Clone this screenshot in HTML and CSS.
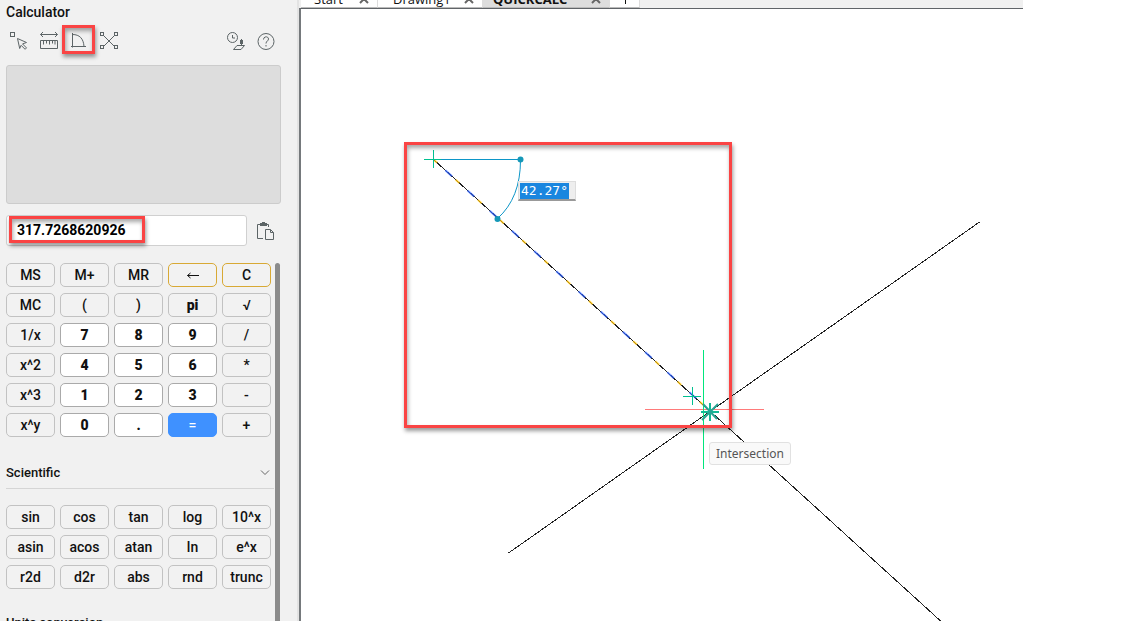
FILE: index.html
```html
<!DOCTYPE html>
<html lang="en">
<head>
<meta charset="utf-8">
<title>Calculator</title>
<link rel="stylesheet" href="styles.css">
</head>
<body>
<div class="app">
  <aside class="panel">
    <h1 class="title">Calculator</h1>
    <div class="toolbar">
      <button class="tool" aria-label="Get coordinates"><svg width="20" height="20" viewBox="0 0 20 20"><rect x="1.500" y="1.500" width="4" height="4"/><path d="M8.500 7.500l9 4-4 1.400 4 4-1.400 1.400-4-4-1.400 3.200z"/></svg></button>
      <button class="tool" aria-label="Distance"><svg width="20" height="20" viewBox="0 0 20 20"><path d="M1.500 3.500h17M4 1L1.500 3.500 4 6M16 1l2.500 2.500L16 6M1.500 9.500h17v8h-17zM4.500 9.500v4M7.500 9.500v3M10.500 9.500v4M13.500 9.500v3M16 9.500v4"/></svg></button>
      <button class="tool" aria-label="Angle"><svg width="20" height="20" viewBox="0 0 20 20"><path d="M3.500 2v14.500M2 15.500h15M3.500 3.500c7 0 11 4 11.500 12"/></svg></button>
      <button class="tool" aria-label="Intersection of lines"><svg width="20" height="20" viewBox="0 0 20 20"><path d="M4.500 4.500l11 11M15.500 4.500l-11 11"/><g class="node"><rect x="1.500" y="1.500" width="3" height="3"/><rect x="15.500" y="1.500" width="3" height="3"/><rect x="1.500" y="14.500" width="3" height="3"/><rect x="15.500" y="14.500" width="3" height="3"/></g></svg></button>
      <span class="spacer"></span>
      <button class="tool" aria-label="Clear history"><svg width="20" height="20" viewBox="0 0 20 20"><circle cx="6.500" cy="6.500" r="5"/><path d="M6.500 4v3H9M11 14.500h7.500l-3.500 4H7.500zM15.500 8v6"/><path class="thick" d="M15.500 9v4"/></svg></button>
      <button class="tool" aria-label="Help"><svg width="20" height="20" viewBox="0 0 20 20"><circle cx="10" cy="10.500" r="8"/><path d="M7.500 8.500c0-3.500 5-3.500 5-.5 0 2-2.500 2-2.500 4.500M10 14v1.500"/></svg></button>
    </div>
    <div class="history"></div>
    <div class="entry">
      <input class="result" type="text" aria-label="Result" value="317.7268620926">
      <button class="tool" aria-label="Paste value"><svg width="20" height="20" viewBox="0 0 20 20"><path d="M8 17.500H2.500v-14h3M11 3.500h2.500V6M10.500 8.500h5l3 3v7h-8zM15.500 8.500v3h3"/><path class="solid" d="M5 2h2V1h3v1h2v3H5z"/></svg></button>
    </div>
    <div class="scroll">
      <div class="keys">
        <button>MS</button><button>M+</button><button>MR</button><button class="edit" aria-label="Backspace"><svg width="14" height="8" viewBox="0 0 14 8"><path d="M1.500 4.500H13M4.500 2l-3 2.500 3 2.500"/></svg></button><button class="edit">C</button>
        <button>MC</button><button>(</button><button>)</button><button class="bold">pi</button><button>√</button>
        <button>1/x</button><button class="digit">7</button><button class="digit">8</button><button class="digit">9</button><button>/</button>
        <button>x^2</button><button class="digit">4</button><button class="digit">5</button><button class="digit">6</button><button>*</button>
        <button>x^3</button><button class="digit">1</button><button class="digit">2</button><button class="digit">3</button><button>-</button>
        <button>x^y</button><button class="digit">0</button><button class="digit">.</button><button class="equals">=</button><button>+</button>
      </div>
      <h2 class="section">Scientific <svg width="10" height="6" viewBox="0 0 10 6"><path d="M1 .5L5 4.500 9 .5"/></svg></h2>
      <div class="keys">
        <button>sin</button><button>cos</button><button>tan</button><button>log</button><button>10^x</button>
        <button>asin</button><button>acos</button><button>atan</button><button>ln</button><button>e^x</button>
        <button>r2d</button><button>d2r</button><button>abs</button><button>rnd</button><button>trunc</button>
      </div>
      <h2 class="section units">Units conversion</h2>
    </div>
    <div class="mark mark-tool"></div>
    <div class="mark mark-result"></div>
  </aside>
  <main class="workspace">
    <nav class="tabs">
      <button class="tab tab-start">Start <svg width="10" height="10" viewBox="0 0 10 10"><path d="M1 1l8 8M9 1L1 9"/></svg></button>
      <button class="tab tab-drawing">Drawing1 <svg width="10" height="10" viewBox="0 0 10 10"><path d="M1 1l8 8M9 1L1 9"/></svg></button>
      <button class="tab tab-current">QUICKCALC <svg width="10" height="10" viewBox="0 0 10 10"><path d="M1 1l8 8M9 1L1 9"/></svg></button>
      <button class="tab tab-new" aria-label="New tab"><svg width="10" height="10" viewBox="0 0 10 10"><path d="M5.500 0v10M0 4.500h10"/></svg></button>
    </nav>
    <div class="canvas">
      <svg class="drawing" width="100%" height="100%">
        <g transform="translate(-301 -9)">
          <path class="line" d="M979.500 222L508.500 553M433.500 159.500L945 625"/>
          <path class="trace-gold" d="M433.500 159.500L710 411"/>
          <path class="trace-blue" d="M433.500 159.500L710 411"/>
          <path class="arc" d="M440 159.500h80.500M520.500 160q0 38-23 58.500"/>
          <path class="cross" d="M424 159.500h17M433.500 150v18M683 396.500h18M692.500 387v18"/>
          <path class="axis-x" d="M645 409.500h119"/>
          <path class="axis-y" d="M703.500 350v119"/>
          <path class="snap" d="M701 412h18M710 403v18"/>
          <path class="snap-x" d="M702 420l16-16M703 404l14 15"/>
          <circle class="grip" cx="520.500" cy="159.500" r="3"/>
          <circle class="grip" cx="497.500" cy="219" r="3"/>
        </g>
      </svg>
      <input class="angle" type="text" aria-label="Angle" value="42.27°">
      <div class="tooltip">Intersection</div>
      <div class="mark mark-lines"></div>
    </div>
  </main>
</div>
</body>
</html>
```
FILE: styles.css
```css
* { box-sizing: border-box; }
body { margin: 0; background: #fff; font-family: Roboto, sans-serif; font-size: 14px; color: #111; overflow: hidden; }
button, input { font: inherit; color: inherit; margin: 0; }
svg { display: block; fill: none; stroke: #5c6466; }
.app { display: flex; height: calc(100vh - 8px); margin-right: 122px; overflow: hidden; }

.panel { position: relative; flex: 0 0 299px; display: flex; flex-direction: column; padding: 4px 0 0 6px; background: #f1f1f1; border-right: 2px solid #e3e3e3; }
.title { margin: 0; font-size: 14px; line-height: 16px; font-weight: 500; }
.toolbar { display: flex; gap: 10px; margin: 11px 21px 0 3px; }
.tool { width: 20px; height: 20px; padding: 0; border: 0; background: none; }
.spacer { flex: 1; }
.node { fill: #f1f1f1; }
.thick { stroke-width: 3; }
.solid { fill: #5c6466; stroke: none; }
.history { flex: 0 0 139px; margin: 14px 16px 0 0; background: #ddd; border: 1px solid #ccc; border-radius: 3px; }
.entry { display: flex; align-items: center; gap: 8px; margin: 11px 22px 0 0; }
.result { flex: 1; min-width: 0; height: 31px; padding: 0 10px 2px; background: #fff; border: 1px solid #d0d0d0; border-radius: 3px; font-weight: 700; color: #000; }

.scroll { position: relative; flex: 1; min-height: 0; margin-top: 17px; overflow: hidden; }
.scroll::after { content: ""; position: absolute; left: 269px; top: 0; bottom: 0; width: 5px; background: #8b8b8b; border-radius: 3px 3px 0 0; }
.keys { display: grid; grid-template-columns: repeat(5, 1fr); gap: 6px 5px; width: 265px; }
.keys button { display: flex; align-items: center; justify-content: center; height: 24px; padding: 0 0 1px; background: #f2f2f2; border: 1px solid #c2c2c2; border-radius: 5px; font-weight: 500; }
.keys .edit { border-color: #d8a935; }
.keys .edit svg { stroke: #111; }
.keys .bold { font-weight: 900; }
.keys .digit { background: #fff; border-color: #aaa; font-weight: 900; }
.keys .equals { background: #3f91ff; border-color: #3f91ff; color: #fff; }
.section { display: flex; justify-content: space-between; align-items: center; width: 268px; height: 31px; margin: 21px 0 16px; padding: 0 4px 1px 0; border-bottom: 1px solid #d5d5d5; font-size: 13px; font-weight: 500; }
.section svg { stroke: #666; }
.units { margin-top: 19px; }

.workspace { flex: 1; min-width: 0; display: flex; flex-direction: column; background: #f0f0f0; }
.tabs { display: flex; flex: 0 0 8px; align-items: flex-end; overflow: hidden; padding-left: 2px; }
.tab { display: flex; align-items: center; justify-content: space-between; height: 18px; padding: 0 8px 0 13px; border: 0; border-right: 1px solid #ddd; border-bottom: 1px solid #bbb; background: #fff; font-family: "Open Sans", sans-serif; font-size: 13px; line-height: 16px; }
.tab svg { stroke: #666; stroke-width: 2; }
.tab-start { width: 77px; }
.tab-drawing { width: 105px; padding-left: 15px; }
.tab-current { width: 127px; padding-left: 10px; background: #ddd; font-weight: 700; }
.tab-new { width: 30px; justify-content: center; padding: 0; }
.tab-new svg { stroke: #111; stroke-width: 1; }
.canvas { position: relative; flex: 1; min-height: 0; overflow: hidden; background: #fff; border-top: 1px solid #606468; border-left: 2px solid #75797c; }

.line { stroke: #222; shape-rendering: crispEdges; }
.trace-gold { stroke: #ffc000; stroke-width: 2; stroke-dasharray: 5 25; stroke-opacity: .7; }
.trace-blue { stroke: #2f62ff; stroke-width: 2; stroke-dasharray: 9 21; stroke-dashoffset: 14; stroke-opacity: .7; }
.arc { stroke: #0d96c8; }
.cross { stroke: #00c090; }
.axis-x { stroke: #ff7a7a; }
.axis-y { stroke: #00e67c; }
.snap { stroke: #12b995; stroke-width: 2; }
.snap-x { stroke: #28a493; stroke-width: 2; }
.grip { fill: #1598b8; stroke: none; }
.angle { position: absolute; left: 217px; top: 172px; width: 58px; height: 20px; padding: 0; border: 1px solid #ddd; border-bottom: 2px solid #999; background: linear-gradient(#1a86df, #1a86df) 1px 1px / 49px 16px no-repeat #eee; color: #fff; font-family: "DejaVu Sans Mono", monospace; font-size: 13px; text-indent: 2px; }
.tooltip { position: absolute; left: 408px; top: 433px; padding: 2px 6px; border: 1px solid #e1e1e1; border-radius: 3px; background: #f9f9f9; color: #555; font-family: "Noto Sans", sans-serif; font-size: 12px; line-height: 17px; }
.mark { position: absolute; border: 3px solid #fa4444; box-shadow: 1px 3px 4px rgba(0,0,0,.4), inset 1px 3px 4px rgba(0,0,0,.35); pointer-events: none; }
.mark-tool { left: 62px; top: 25px; width: 33px; height: 29px; }
.mark-result { left: 9px; top: 216px; width: 136px; height: 27px; }
.mark-lines { left: 103px; top: 133px; width: 328px; height: 286px; }
```
